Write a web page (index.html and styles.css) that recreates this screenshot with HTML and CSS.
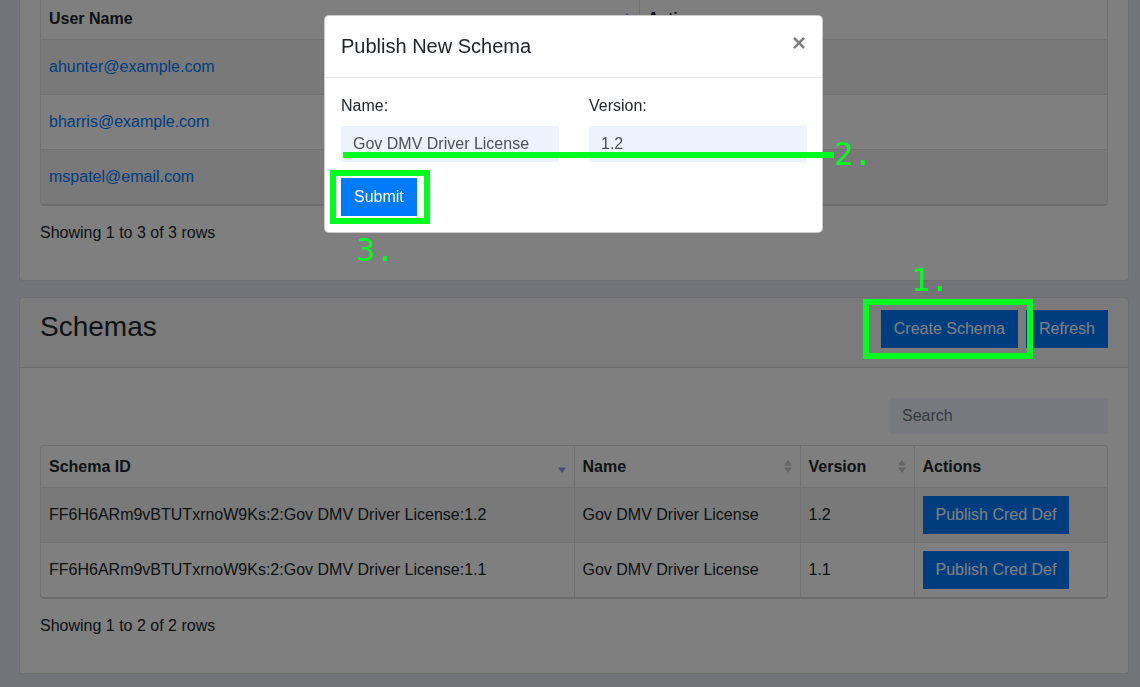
FILE: index.html
```html
<!DOCTYPE html>
<html lang="en">
<head>
<meta charset="utf-8">
<title>Schemas</title>
<link rel="stylesheet" href="styles.css">
</head>
<body>
<div class="page">
  <section class="card">
    <div class="card-body">
      <div class="table-wrap">
        <table class="data-table">
          <thead>
            <tr>
              <th class="col-user"><div class="th-inner"><span>User Name</span>
                <svg class="sort-icon" width="8" height="15" viewBox="0 0 8 15"><path d="M0 6.5L4 1l4 5.5z" fill="#9595f0"/></svg></div></th>
              <th><div class="th-inner"><span>Actions</span></div></th>
            </tr>
          </thead>
          <tbody>
            <tr><td><a class="link" href="#">ahunter@example.com</a></td><td><button class="btn">Edit</button></td></tr>
            <tr><td><a class="link" href="#">bharris@example.com</a></td><td><button class="btn">Edit</button></td></tr>
            <tr><td><a class="link" href="#">mspatel@email.com</a></td><td><button class="btn">Edit</button></td></tr>
          </tbody>
        </table>
      </div>
      <div class="pagination-info">Showing 1 to 3 of 3 rows</div>
    </div>
  </section>

  <section class="card">
    <div class="card-header">
      <h3 class="card-title">Schemas</h3>
      <div class="header-actions">
        <button class="btn">Create Schema</button>
        <button class="btn">Refresh</button>
      </div>
    </div>
    <div class="card-body">
      <div class="toolbar">
        <input class="search" type="text" placeholder="Search">
      </div>
      <div class="table-wrap">
        <table class="data-table">
          <thead>
            <tr>
              <th class="col-id"><div class="th-inner"><span>Schema ID</span>
                <svg class="sort-icon" width="8" height="15" viewBox="0 0 8 15"><path d="M0 8.5L4 14l4-5.5z" fill="#9595f0"/></svg></div></th>
              <th class="col-name"><div class="th-inner"><span>Name</span>
                <svg class="sort-icon" width="8" height="15" viewBox="0 0 8 15"><path d="M0 6.5L4 1l4 5.5z M0 8.5L4 14l4-5.5z" fill="#cbcbcb"/></svg></div></th>
              <th class="col-version"><div class="th-inner"><span>Version</span>
                <svg class="sort-icon" width="8" height="15" viewBox="0 0 8 15"><path d="M0 6.5L4 1l4 5.5z M0 8.5L4 14l4-5.5z" fill="#cbcbcb"/></svg></div></th>
              <th><div class="th-inner"><span>Actions</span></div></th>
            </tr>
          </thead>
          <tbody>
            <tr><td>FF6H6ARm9vBTUTxrnoW9Ks:2:Gov DMV Driver License:1.2</td><td>Gov DMV Driver License</td><td>1.2</td><td><button class="btn">Publish Cred Def</button></td></tr>
            <tr><td>FF6H6ARm9vBTUTxrnoW9Ks:2:Gov DMV Driver License:1.1</td><td>Gov DMV Driver License</td><td>1.1</td><td><button class="btn">Publish Cred Def</button></td></tr>
          </tbody>
        </table>
      </div>
      <div class="pagination-info">Showing 1 to 2 of 2 rows</div>
    </div>
  </section>
</div>

<div class="backdrop"></div>

<div class="modal">
  <div class="modal-dialog">
    <div class="modal-content">
      <div class="modal-header">
        <h5 class="modal-title">Publish New Schema</h5>
        <button class="close" type="button" aria-label="Close">×</button>
      </div>
      <div class="modal-body">
        <div class="form-row">
          <div class="form-group">
            <label class="label">Name:</label>
            <input class="input" type="text" value="Gov DMV Driver License">
          </div>
          <div class="form-group">
            <label class="label">Version:</label>
            <input class="input" type="text" value="1.2">
          </div>
        </div>
        <button class="btn btn-submit">Submit</button>
      </div>
    </div>
  </div>
</div>

<div class="annotations">
  <div class="anno-box anno-box-submit"></div>
  <div class="anno-box anno-box-create"></div>
  <div class="anno-line"></div>
  <div class="anno-num anno-num-1">1.</div>
  <div class="anno-num anno-num-2">2.</div>
  <div class="anno-num anno-num-3">3.</div>
</div>
</body>
</html>
```

FILE: styles.css
```css
* { box-sizing: border-box; }

html, body { margin: 0; height: 100%; }

body {
  background: #e7e9f2;
  font-family: "Liberation Sans", Arial, Helvetica, sans-serif;
  font-size: 16px;
  line-height: 1.5;
  color: #212529;
  overflow: hidden;
}

.page {
  display: flex;
  flex-direction: column;
  gap: 16px;
  margin-top: -24px;
  padding: 0 11px 0 19px;
}

.card {
  background: #fff;
  border: 1px solid rgba(0, 0, 0, 0.125);
  border-radius: 4px;
}

.card-header {
  display: flex;
  justify-content: space-between;
  align-items: flex-start;
  padding: 12px 20px 15px;
  background: rgba(0, 0, 0, 0.03);
  border-bottom: 1px solid rgba(0, 0, 0, 0.125);
}

.card-title {
  margin: 0 0 8px;
  font-size: 28px;
  font-weight: 400;
  line-height: 1.2;
}

.header-actions { display: flex; gap: 8px; }

.card-body { padding: 20px; }

.btn {
  font-family: inherit;
  font-size: 16px;
  line-height: 24px;
  padding: 6px 12px;
  border: 1px solid #007bff;
  background: #007bff;
  color: #fff;
  border-radius: 0;
  cursor: pointer;
}

.toolbar {
  display: flex;
  justify-content: flex-end;
  margin: 10px 0 11px;
}

.search {
  width: 218px;
  height: 36px;
  border: 0;
  background: #eef2fc;
  padding: 6px 12px;
  font-family: inherit;
  font-size: 16px;
  color: #495057;
}
.search::placeholder { color: #6c757d; }

.table-wrap {
  border: 1px solid #dee2e6;
  border-bottom: 2px solid #d4d8dc;
  border-radius: 4px;
  overflow: hidden;
}

.data-table {
  width: 100%;
  border-collapse: collapse;
  table-layout: fixed;
}

.data-table th,
.data-table td {
  padding: 8px;
  text-align: left;
  vertical-align: middle;
  border-left: 1px solid #dee2e6;
  border-bottom: 1px solid #dee2e6;
}
.data-table th:first-child,
.data-table td:first-child { border-left: 0; }
.data-table tbody tr:last-child td { border-bottom: 0; }

.data-table th {
  font-weight: 700;
  line-height: 24px;
  padding-top: 9px;
}
.data-table tbody tr:nth-child(odd) { background: rgba(0, 0, 0, 0.05); }

.th-inner {
  display: flex;
  justify-content: space-between;
  align-items: center;
}

.sort-icon { display: block; flex: none; }

.col-user { width: 598px; }
.col-id { width: 533px; }
.col-name { width: 226px; }
.col-version { width: 114px; }

.link { color: #007bff; text-decoration: none; }

.pagination-info {
  margin: 10px 0;
  line-height: 34px;
}

/* modal */
.backdrop {
  position: fixed;
  inset: 0;
  background: rgba(0, 0, 0, 0.5);
}

.modal {
  position: fixed;
  inset: 0;
}

.modal-dialog {
  width: 499px;
  margin: 15px 0 0 324px;
}

.modal-content {
  background: #fff;
  border: 1px solid rgba(0, 0, 0, 0.2);
  border-radius: 5px;
}

.modal-header {
  display: flex;
  align-items: flex-start;
  justify-content: space-between;
  padding: 15px 16px 16px;
  border-bottom: 1px solid #e9ecef;
}

.modal-title {
  margin: 0;
  font-size: 20px;
  font-weight: 400;
  line-height: 1.5;
}

.close {
  padding: 16px;
  margin: -16px -16px -16px auto;
  background: none;
  border: 0;
  font-family: inherit;
  font-size: 24px;
  font-weight: 700;
  line-height: 1;
  color: #000;
  opacity: 0.5;
  text-shadow: 0 1px 0 #fff;
}

.modal-body { padding: 16px; }

.form-row {
  display: grid;
  grid-template-columns: 218px 218px;
  column-gap: 30px;
}

.form-group { margin-bottom: 16px; }

.label {
  display: block;
  margin-bottom: 8px;
}

.input {
  display: block;
  width: 100%;
  height: 36px;
  border: 0;
  background: #eef2fc;
  padding: 6px 12px;
  font-family: inherit;
  font-size: 16px;
  color: #495057;
}

.btn-submit { display: block; }

/* annotations */
.annotations {
  position: fixed;
  inset: 0;
  pointer-events: none;
}

.anno-box {
  position: absolute;
  border: 6px solid #00ff1f;
}
.anno-box-submit { left: 330px; top: 170px; width: 100px; height: 54px; }
.anno-box-create { left: 863px; top: 299px; width: 170px; height: 60px; }

.anno-line {
  position: absolute;
  left: 343px;
  top: 152px;
  width: 491px;
  height: 6px;
  background: #00ff1f;
}

.anno-num {
  position: absolute;
  font-family: "DejaVu Sans Mono", monospace;
  font-size: 32px;
  line-height: 32px;
  color: #00ff1f;
}
.anno-num-1 { left: 911px; top: 264px; }
.anno-num-2 { left: 834px; top: 138px; }
.anno-num-3 { left: 356px; top: 234px; }
```
